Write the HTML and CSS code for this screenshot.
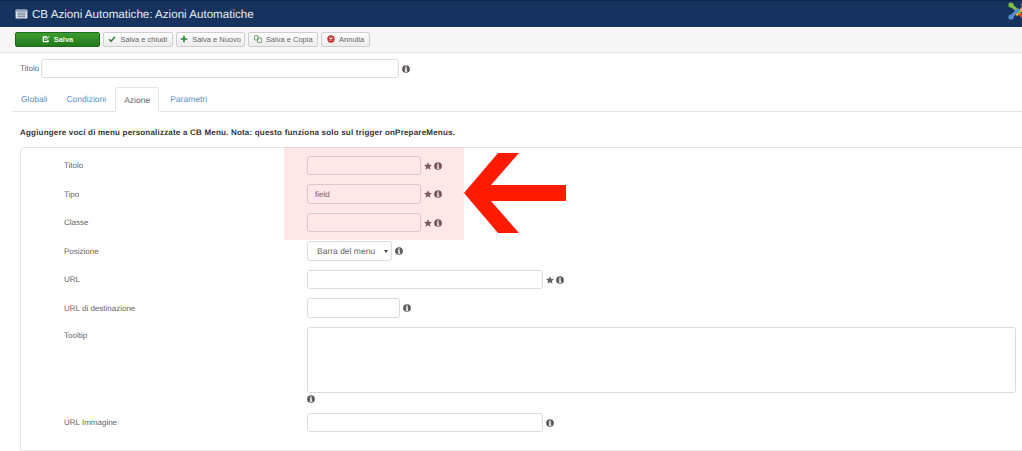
FILE: index.html
```html
<!DOCTYPE html>
<html lang="it">
<head>
<meta charset="utf-8">
<title>CB Azioni Automatiche</title>
<link rel="stylesheet" href="styles.css">
</head>
<body>
<svg class="defs" width="0" height="0" aria-hidden="true">
  <symbol id="info" viewBox="0 0 12 12"><circle cx="6" cy="6" r="5.8" fill="#5f5a58"/><rect x="4.8" y="2.2" width="2.4" height="1.9" fill="#fff"/><path d="M4.2 5h3v3.6h.8V10H4.2V8.6H5V6.3h-.8z" fill="#fff"/></symbol>
  <symbol id="star" viewBox="0 0 12 12"><path d="M6 .2l1.800 3.800 4.100.5-3 2.900.8 4.100L6 9.500l-3.700 2 .8-4.100-3-2.900 4.100-.5z" fill="#6a6563"/></symbol>
</svg>
<header class="topbar">
  <svg class="title-icon" viewBox="0 0 14 11"><rect x=".5" y=".5" width="13" height="10" rx="1" fill="#dfe6f0"/><rect x="1" y="1" width="12" height="2" fill="#8fa0ba"/><path d="M2.500 4.500h9M2.500 6.500h9M2.500 8.500h9" stroke="#5a6f92"/></svg>
  <h1 class="title">CB Azioni Automatiche: Azioni Automatiche</h1>
  <svg class="logo" viewBox="0 0 22 22">
    <path d="M9 8l8 8" fill="none" stroke="#f44321" stroke-width="3.200"/>
    <path d="M17 5l-8 8" fill="none" stroke="#f9a541" stroke-width="3.200"/>
    <path d="M4 3l9 8" fill="none" stroke="#7ac143" stroke-width="3.200"/>
    <path d="M4 15l8-8" fill="none" stroke="#5091cd" stroke-width="3.200"/>
    <circle cx="4" cy="3" r="2.600" fill="#7ac143"/><circle cx="4" cy="15" r="2.600" fill="#5091cd"/><circle cx="18" cy="17" r="2.600" fill="#f44321"/><circle cx="17" cy="3" r="2.600" fill="#f9a541"/>
  </svg>
</header>
<nav class="toolbar">
  <button class="btn btn-save"><svg class="ico" viewBox="0 0 12 12"><path d="M1 2h7v2H3v5h5V7h2v4H1z" fill="#fff"/><path d="M4 5l2 2 5-5" fill="none" stroke="#fff" stroke-width="1.500"/></svg>Salva</button>
  <button class="btn btn-w1"><svg class="ico" viewBox="0 0 12 12"><path d="M1.500 6.500l3 3 6-7" fill="none" stroke="#378137" stroke-width="2.200"/></svg>Salva e chiudi</button>
  <button class="btn btn-w1"><svg class="ico" viewBox="0 0 12 12"><path d="M4.700 1h2.600v3.700H11v2.600H7.300V11H4.700V7.300H1V4.700h3.700z" fill="#378137"/></svg>Salva e Nuovo</button>
  <button class="btn btn-w1"><svg class="ico" viewBox="0 0 12 12"><path d="M1 1h5v6.500H1zM5.500 4.500H11V11H5.500z" fill="#fff" stroke="#378137"/></svg>Salva e Copia</button>
  <button class="btn btn-w2"><svg class="ico" viewBox="0 0 12 12"><circle cx="6" cy="6" r="5.500" fill="#bd362f"/><path d="M3.800 3.800l4.400 4.400M8.200 3.800l-4.400 4.400" stroke="#fff" stroke-width="1.600"/></svg>Annulla</button>
</nav>
<main class="content">
  <div class="title-row">
    <label class="title-label">Titolo</label>
    <div class="input title-input"></div>
    <svg class="i"><use href="#info"/></svg>
  </div>
  <ul class="tabs">
    <li class="tab">Globali</li>
    <li class="tab">Condizioni</li>
    <li class="tab active">Azione</li>
    <li class="tab">Parametri</li>
  </ul>
  <p class="note">Aggiungere voci di menu personalizzate a CB Menu. Nota: questo funziona solo sul trigger onPrepareMenus.</p>
  <section class="panel">
    <div class="row"><label>Titolo</label><div class="input w-s"></div><svg class="i star"><use href="#star"/></svg><svg class="i"><use href="#info"/></svg></div>
    <div class="row"><label>Tipo</label><div class="input w-s">field</div><svg class="i star"><use href="#star"/></svg><svg class="i"><use href="#info"/></svg></div>
    <div class="row"><label>Classe</label><div class="input w-s"></div><svg class="i star"><use href="#star"/></svg><svg class="i"><use href="#info"/></svg></div>
    <div class="row"><label>Posizione</label><div class="input select">Barra del menu<span class="caret"></span></div><svg class="i"><use href="#info"/></svg></div>
    <div class="row"><label>URL</label><div class="input w-l"></div><svg class="i star"><use href="#star"/></svg><svg class="i"><use href="#info"/></svg></div>
    <div class="row"><label>URL di destinazione</label><div class="input w-xs"></div><svg class="i"><use href="#info"/></svg></div>
    <div class="row row-area"><label>Tooltip</label><div class="area-col"><div class="input area"></div><svg class="i"><use href="#info"/></svg></div></div>
    <div class="row"><label>URL Immagine</label><div class="input w-l"></div><svg class="i"><use href="#info"/></svg></div>
  </section>
</main>
<div class="highlight"></div>
<svg class="arrow" viewBox="0 0 102 80"><path d="M0 40L34 0h21L27 32h75v16H27l28 32H34z" fill="#ff1a00"/></svg>
</body>
</html>
```

FILE: styles.css
```css
* { box-sizing: border-box; }
html, body { margin: 0; padding: 0; }
body {
  width: 1022px;
  height: 451px;
  overflow: hidden;
  position: relative;
  background: #fff;
  font-family: "Liberation Sans", Arial, sans-serif;
  font-size: 8px;
  color: #555;
  text-rendering: geometricPrecision;
}
.defs { position: absolute; }
.topbar {
  height: 27px;
  display: flex;
  align-items: center;
  padding-left: 15px;
  background: #16325f;
  border-top: 1px solid #0e2347;
  position: relative;
  overflow: hidden;
}
.title-icon { width: 13px; height: 10px; margin-right: 4px; }
.title { margin: 0; font-size: 11.600px; font-weight: 400; color: #e6ebf3; white-space: nowrap; }
.logo { position: absolute; left: 1007px; top: 1px; width: 22px; height: 22px; }
.toolbar {
  height: 26px;
  display: flex;
  align-items: center;
  gap: 3px;
  padding: 0 0 1px 15px;
  background: #f6f6f6;
  border-bottom: 1px solid #e6e6e6;
}
.btn {
  height: 15px;
  padding: 0;
  display: flex;
  align-items: center;
  justify-content: center;
  gap: 4px;
  font: 7.500px "Liberation Sans", Arial, sans-serif;
  color: #666;
  background: linear-gradient(#fdfdfd, #ececec);
  border: 1px solid #cfcfcf;
  border-radius: 2px;
}
.ico { width: 8px; height: 8px; flex: none; }
.btn-save {
  width: 85px;
  color: #e9f5e4;
  font-weight: 700;
  background: linear-gradient(#3d9c2e, #237a1c);
  border-color: #1f6b1a;
}
.btn-w1 { width: 69.700px; }
.btn-w2 { width: 49px; }
.content { padding: 6px 0 0 20px; }
.title-row { display: flex; align-items: center; height: 19px; }
.title-label { width: 21px; font-size: 8px; color: #666; }
.title-input { width: 358px; height: 19.500px; margin-right: 3px; }
.input {
  display: flex;
  align-items: center;
  background: transparent;
  border: 1px solid #dcdcdc;
  border-radius: 3px;
  font-size: 8px;
  color: #666;
}
.i { width: 8px; height: 8px; flex: none; }
.star { margin-right: -1.500px; }
.tabs {
  list-style: none;
  margin: 9px 0 0 -8px;
  padding: 0;
  height: 25px;
  display: flex;
  border-bottom: 1px solid #e4e4e4;
}
.tab {
  padding: 0 9px 1px;
  margin-right: 1px;
  display: flex;
  align-items: center;
  font-size: 8.500px;
  color: #5a8fc4;
  height: 25px;
}
.tab.active {
  color: #666;
  background: #fff;
  border: 1px solid #e4e4e4;
  border-bottom-color: #fff;
  border-radius: 3px 3px 0 0;
  padding: 0 8px;
  margin: 0 2px 0 -1px;
}
.note {
  margin: 16px 0 0;
  height: 10px;
  line-height: 10px;
  font-size: 8px;
  font-weight: 700;
  letter-spacing: .2px;
  color: #333;
  white-space: nowrap;
}
.panel {
  margin-top: 9px;
  width: 1010px;
  height: 304px;
  padding: 8px 0 0 43px;
  border: 1px solid #e6e6e6;
  border-radius: 3px;
}
.row {
  display: flex;
  align-items: center;
  height: 19px;
  margin-bottom: 9.500px;
  gap: 3px;
}
.row label { width: 240px; font-size: 8px; color: #666; flex: none; }
.w-s { width: 114px; height: 19.500px; padding-left: 7px; }
.w-l { width: 236px; height: 19.500px; }
.w-xs { width: 93px; height: 19.500px; }
.select {
  width: 85px;
  height: 19.500px;
  padding-left: 9px;
  font-size: 8.500px;
  position: relative;
}
.caret {
  position: absolute;
  right: 3px;
  top: 8px;
  border: 2px solid transparent;
  border-top: 3px solid #444;
  border-bottom: 0;
}
.row-area { height: 78px; align-items: flex-start; margin-bottom: 8px; }
.row-area label { line-height: 18px; }
.area-col { display: flex; flex-direction: column; gap: 2px; }
.area { width: 709px; height: 66px; }
.highlight {
  position: absolute;
  left: 284px;
  top: 147px;
  width: 180px;
  height: 93px;
  background: rgba(255, 40, 40, .115);
}
.arrow {
  position: absolute;
  left: 464px;
  top: 153px;
  width: 102px;
  height: 80px;
}
```
